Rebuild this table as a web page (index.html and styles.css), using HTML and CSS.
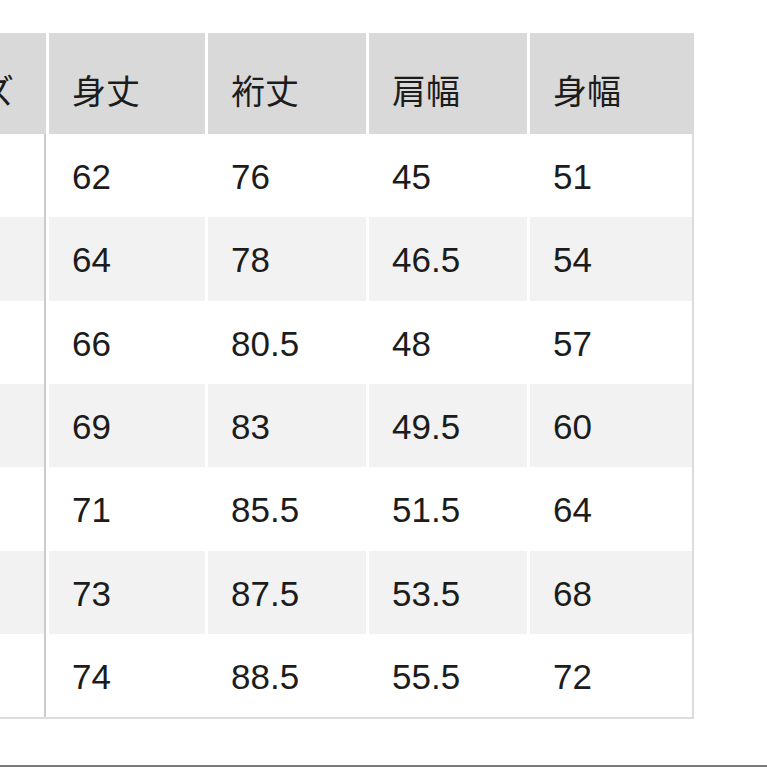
FILE: index.html
```html
<!DOCTYPE html>
<html lang="ja">
<head>
<meta charset="utf-8">
<title>サイズ表</title>
<link rel="stylesheet" href="styles.css">
</head>
<body>
<div class="table">
  <div class="row head">
    <div class="cell first">サイズ</div>
    <div class="cell">身丈</div>
    <div class="cell">裄丈</div>
    <div class="cell">肩幅</div>
    <div class="cell">身幅</div>
  </div>
  <div class="row">
    <div class="cell first">XS</div>
    <div class="cell">62</div>
    <div class="cell">76</div>
    <div class="cell">45</div>
    <div class="cell last">51</div>
  </div>
  <div class="row alt">
    <div class="cell first">S</div>
    <div class="cell">64</div>
    <div class="cell">78</div>
    <div class="cell">46.5</div>
    <div class="cell last">54</div>
  </div>
  <div class="row">
    <div class="cell first">M</div>
    <div class="cell">66</div>
    <div class="cell">80.5</div>
    <div class="cell">48</div>
    <div class="cell last">57</div>
  </div>
  <div class="row alt">
    <div class="cell first">L</div>
    <div class="cell">69</div>
    <div class="cell">83</div>
    <div class="cell">49.5</div>
    <div class="cell last">60</div>
  </div>
  <div class="row">
    <div class="cell first">XL</div>
    <div class="cell">71</div>
    <div class="cell">85.5</div>
    <div class="cell">51.5</div>
    <div class="cell last">64</div>
  </div>
  <div class="row alt">
    <div class="cell first">XXL</div>
    <div class="cell">73</div>
    <div class="cell">87.5</div>
    <div class="cell">53.5</div>
    <div class="cell last">68</div>
  </div>
  <div class="row">
    <div class="cell first">3XL</div>
    <div class="cell">74</div>
    <div class="cell">88.5</div>
    <div class="cell">55.5</div>
    <div class="cell last">72</div>
  </div>
</div>
<div class="rule"></div>
</body>
</html>
```
FILE: styles.css
```css
html, body {
  margin: 0;
  padding: 0;
  background: #ffffff;
  overflow: hidden;
}
body {
  width: 767px;
  height: 767px;
  font-family: "Liberation Sans", "Noto Sans CJK JP", sans-serif;
  color: #1c1c1c;
}
.table {
  width: 801px;
  margin-top: 33px;
  margin-left: -107px;
  border-bottom: 2px solid #dcdcdc;
}
.row {
  display: grid;
  grid-template-columns: 153px 156px 158px 158px 164px;
  column-gap: 3px;
  height: 83.33px;
}
.cell {
  box-sizing: border-box;
  display: flex;
  align-items: center;
  padding-left: 23px;
  padding-top: 3px;
  font-size: 35px;
  white-space: nowrap;
  overflow: hidden;
}
.head {
  height: 101px;
}
.head .cell {
  background: #d9d9d9;
  padding-top: 12px;
  font-family: "Noto Sans CJK JP", sans-serif;
  font-weight: 400;
  font-size: 34px;
}
.head .first {
  padding-left: 20px;
}
.alt .cell {
  background: #f2f2f2;
}
.first {
  border-right: 2px solid #cbcbcb;
}
.head .first {
  border-right: none;
}
.last {
  border-right: 2px solid #dcdcdc;
}
.rule {
  margin-top: 46px;
  height: 2px;
  background: #7a7a7a;
}
```
